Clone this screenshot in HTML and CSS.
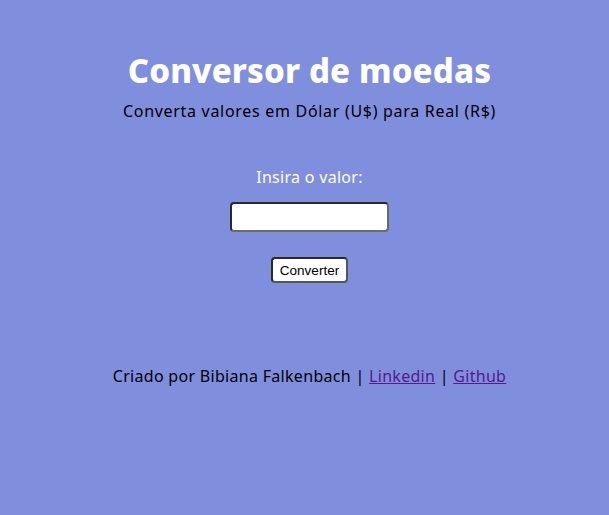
FILE: index.html
```html
<!DOCTYPE html>
<html lang="pt-BR">
<head>
<meta charset="utf-8">
<title>Conversor de moedas</title>
<link rel="stylesheet" href="styles.css">
</head>
<body>
<main class="page">
  <header class="head">
    <h1 class="title">Conversor de moedas</h1>
    <p class="subtitle">Converta valores em Dólar (U$) para Real (R$)</p>
  </header>
  <section class="form">
    <label class="label" for="valor">Insira o valor:</label>
    <input class="input" id="valor" type="text">
    <button class="btn" type="button">Converter</button>
  </section>
  <footer class="foot">
    Criado por Bibiana Falkenbach | <a class="link" href="#">Linkedin</a> | <a class="link" href="#">Github</a>
  </footer>
</main>
</body>
</html>
```

FILE: styles.css
```css
html, body {
  margin: 0;
  padding: 0;
  background: #7f8fde;
}
body {
  font-family: "Noto Sans", "DejaVu Sans", sans-serif;
  color: #000;
  min-height: 515px;
}
.page {
  display: flex;
  flex-direction: column;
  align-items: center;
  padding-top: 49px;
  padding-left: 10px;
}
.head {
  display: flex;
  flex-direction: column;
  align-items: center;
}
.title {
  margin: 0;
  font-size: 33px;
  font-weight: 800;
  color: #fff;
  line-height: 44px;
  letter-spacing: 0.15px;
}
.subtitle {
  margin: 7px 0 0;
  font-size: 16px;
  line-height: 22px;
  letter-spacing: 0.7px;
}
.form {
  display: flex;
  flex-direction: column;
  align-items: center;
  margin-top: 44px;
}
.label {
  color: #fff;
  font-size: 16px;
  line-height: 22px;
  letter-spacing: 0.3px;
}
.input {
  box-sizing: border-box;
  width: 159px;
  height: 30px;
  margin-top: 14px;
  border: 2px solid #2a2a2a;
  border-right-color: #6a6a6a;
  border-bottom-color: #6a6a6a;
  border-radius: 4px;
  background: #fff;
  padding: 0 4px;
}
.btn {
  box-sizing: border-box;
  width: 77px;
  height: 26px;
  margin-top: 25px;
  background: #fff;
  border: 2px solid #2a2a2a;
  border-right-color: #555;
  border-bottom-color: #555;
  border-radius: 4px;
  font-family: "Liberation Sans", Arial, sans-serif;
  font-size: 13.5px;
  color: #000;
  padding: 0;
}
.foot {
  margin-top: 82px;
  font-size: 16px;
  line-height: 22px;
  letter-spacing: 0.3px;
}
.link {
  color: #551a8b;
}
```
